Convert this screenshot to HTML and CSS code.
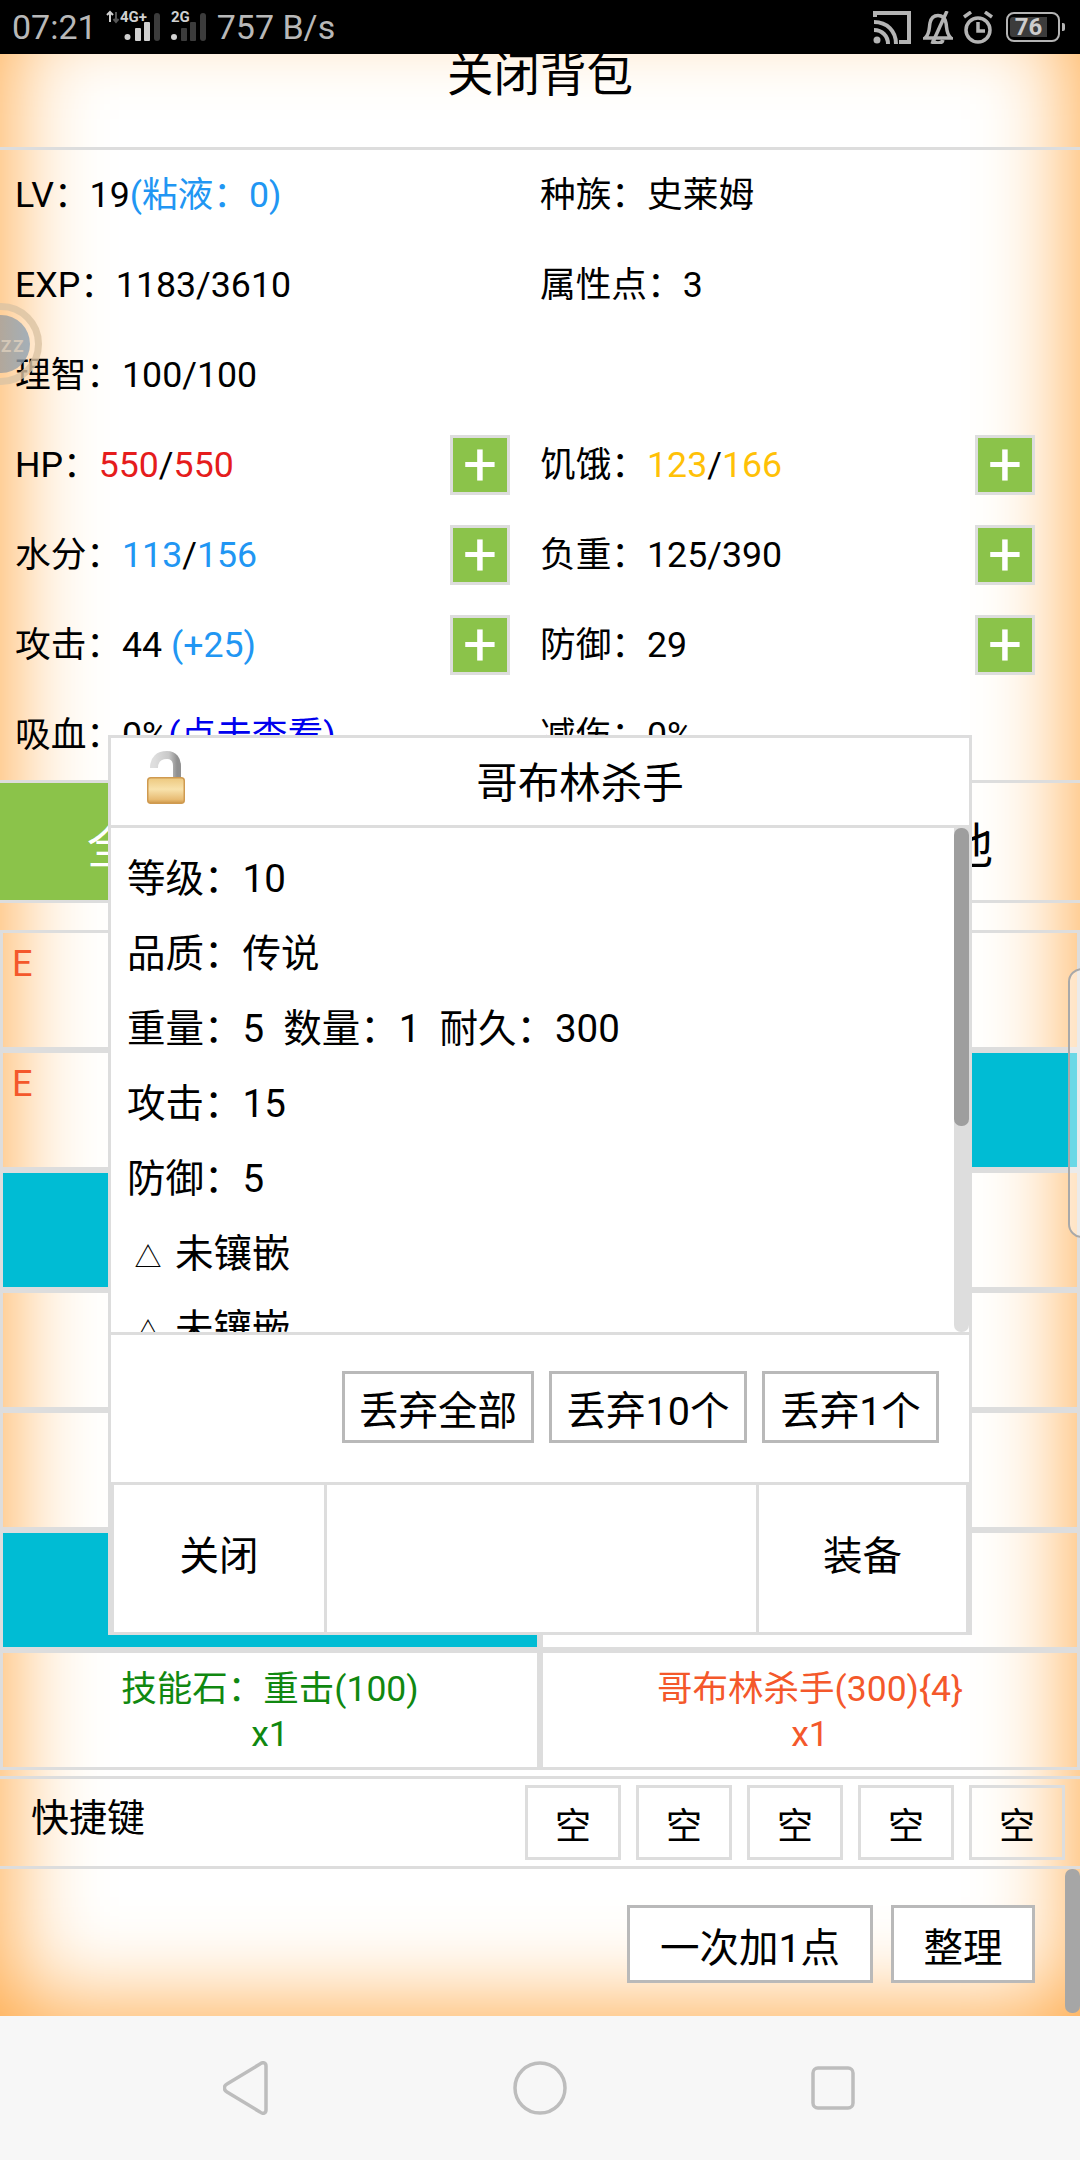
FILE: index.html
```html
<!DOCTYPE html>
<html lang="zh">
<head>
<meta charset="utf-8">
<title>背包</title>
<link rel="stylesheet" href="styles.css">
</head>
<body>
<div class="screen">
  <header class="status">
    <div class="status-left">
      <span class="clock">07:21</span>
      <svg class="sig-a" width="55" height="54" viewBox="0 0 55 54">
        <path d="M4 12V22M1 15L4 12L7 15" fill="none" stroke="#d0d0d0" stroke-width="2"/>
        <path d="M10 12V22M7.500 19L10 22L12.500 19" fill="none" stroke="#555" stroke-width="2"/>
        <text x="14" y="22" class="sig-t">4G+</text>
        <circle cx="21.500" cy="37" r="3" fill="#d0d0d0"/><rect x="29" y="28" width="6" height="13" rx="1" fill="#d0d0d0"/><rect x="38" y="22" width="6" height="19" rx="1" fill="#d0d0d0"/><rect x="48" y="13" width="6" height="28" rx="3" fill="#3c3c3c"/>
      </svg>
      <svg class="sig-b" width="36" height="54" viewBox="0 0 36 54">
        <text x="0" y="22" class="sig-t">2G</text>
        <circle cx="3" cy="37" r="3" fill="#d0d0d0"/><rect x="10" y="28" width="6" height="13" rx="1" fill="#3c3c3c"/><rect x="19" y="22" width="6" height="19" rx="1" fill="#3c3c3c"/><rect x="29" y="13" width="6" height="28" rx="3" fill="#3c3c3c"/>
      </svg>
      <span class="speed">757 B/s</span>
    </div>
    <div class="status-right">
      <svg class="i-cast" width="38" height="33" viewBox="0 0 38 33" fill="none" stroke="#b4b4b4" stroke-width="4">
        <path d="M2 6V2H36V31H26"/><path d="M1 11C14 11 23 20 23 33"/><path d="M1 19C9 19 15 25 15 33"/><circle cx="4" cy="29" r="3.500" fill="#b4b4b4" stroke="none"/>
      </svg>
      <svg class="i-bell" width="30" height="33" viewBox="0 0 30 33" fill="none" stroke="#b4b4b4" stroke-width="3.500">
        <path d="M2 27C7 23 6 17 7 12C8 7 11 4.500 15 4.500C19 4.500 22 7 23 12C24 17 23 23 28 27Z"/><path d="M10 29C11 33 19 33 20 29"/><path d="M24 0L9 33"/>
      </svg>
      <svg class="i-alarm" width="30" height="33" viewBox="0 0 30 33" fill="none" stroke="#b4b4b4" stroke-width="3.500">
        <circle cx="15" cy="19" r="12"/><path d="M15 11V20H22"/><path d="M1 6L8 1"/><path d="M29 6L22 1"/>
      </svg>
      <div class="battery"><span class="battery-fill">76</span></div><span class="battery-cap"></span>
    </div>
  </header>

  <main class="page">
    <div class="title">关闭背包</div>

    <section class="stats">
      <div class="stat"><span>LV：19<span class="blue">(粘液：0)</span></span></div>
      <div class="stat"><span>种族：史莱姆</span></div>
      <div class="stat"><span>EXP：1183/3610</span></div>
      <div class="stat"><span>属性点：3</span></div>
      <div class="stat wide"><span>理智：100/100</span></div>
      <div class="stat"><span>HP：<span class="red">550</span>/<span class="red">550</span></span><button class="plus">+</button></div>
      <div class="stat"><span>饥饿：<span class="yellow">123</span>/<span class="yellow">166</span></span><button class="plus">+</button></div>
      <div class="stat"><span>水分：<span class="blue">113</span>/<span class="blue">156</span></span><button class="plus">+</button></div>
      <div class="stat"><span>负重：125/390</span><button class="plus">+</button></div>
      <div class="stat"><span>攻击：44 <span class="blue">(+25)</span></span><button class="plus">+</button></div>
      <div class="stat"><span>防御：29</span><button class="plus">+</button></div>
      <div class="stat"><span>吸血：0%<span class="link">(点击查看)</span></span></div>
      <div class="stat"><span>减伤：0%</span></div>
    </section>

    <nav class="tabs">
      <div class="tab active">全部</div>
      <div class="tab">装备</div>
      <div class="tab">道具</div>
      <div class="tab">其他</div>
    </nav>

    <section class="items">
      <div class="item rank"><span class="e">E</span></div>
      <div class="item"></div>
      <div class="item rank"><span class="e">E</span></div>
      <div class="item cyan"></div>
      <div class="item cyan"></div>
      <div class="item"></div>
      <div class="item"></div>
      <div class="item"></div>
      <div class="item"></div>
      <div class="item"></div>
      <div class="item cyan"></div>
      <div class="item"></div>
      <div class="item named green">技能石：重击(100)<br>x1</div>
      <div class="item named orange">哥布林杀手(300){4}<br>x1</div>
    </section>

    <section class="shortcuts">
      <span class="shortcut-label">快捷键</span>
      <div class="slots">
        <div class="slot">空</div><div class="slot">空</div><div class="slot">空</div><div class="slot">空</div><div class="slot">空</div>
      </div>
    </section>

    <section class="actions">
      <button class="btn add">一次加1点</button>
      <button class="btn tidy">整理</button>
    </section>
  </main>

  <footer class="nav">
    <svg width="46" height="54" viewBox="0 0 46 54" fill="none" stroke="#bdbdbd" stroke-width="3.500" stroke-linejoin="round"><path d="M37 3C40 0.500 43 2 43 5V49C43 52 40 53.500 37 51L4 31C0.500 29 0.500 25 4 23Z"/></svg>
    <svg width="54" height="54" viewBox="0 0 54 54" fill="none" stroke="#bdbdbd" stroke-width="3.500"><circle cx="27" cy="27" r="25"/></svg>
    <svg width="44" height="44" viewBox="0 0 44 44" fill="none" stroke="#bdbdbd" stroke-width="3.500"><rect x="2" y="2" width="40" height="40" rx="5"/></svg>
  </footer>

  <div class="float-badge" aria-hidden="true">
    <svg width="46" height="88" viewBox="0 0 46 88">
      <defs>
        <linearGradient id="disc" x1="0" x2="1" y1="0" y2="0"><stop offset="0" stop-color="#b09a84"/><stop offset="1" stop-color="#8ea3b6"/></linearGradient>
      </defs>
      <circle cx="1" cy="43" r="37.500" fill="none" stroke="#dcc4a4" stroke-width="7"/>
      <circle cx="1" cy="43" r="29" fill="url(#disc)"/>
      <text x="1" y="51" class="badge-t">ZZ</text>
    </svg>
  </div>
  <div class="side-tab" aria-hidden="true"></div>
  <div class="page-thumb" aria-hidden="true"></div>

  <div class="modal">
    <div class="modal-head">
      <svg class="lock" width="38" height="53" viewBox="0 0 38 53">
        <defs>
          <linearGradient id="shackle" x1="0" x2="1" y1="0" y2="0"><stop offset="0" stop-color="#dedede"/><stop offset=".65" stop-color="#c8c8c8"/><stop offset="1" stop-color="#909090"/></linearGradient>
          <linearGradient id="body" x1="0" x2="0" y1="0" y2="1"><stop offset="0" stop-color="#edc87e"/><stop offset=".45" stop-color="#f8e2ac"/><stop offset=".85" stop-color="#e8bc74"/><stop offset="1" stop-color="#cf9848"/></linearGradient>
        </defs>
        <path d="M7 17C7 8 12 4 20 4C27 4 30 9 30 15V28" fill="none" stroke="url(#shackle)" stroke-width="8"/>
        <rect x="0.750" y="26.750" width="36.500" height="25.500" rx="3" fill="url(#body)" stroke="#cf9a50" stroke-width="1.500"/>
      </svg>
      <div class="modal-title">哥布林杀手</div>
    </div>
    <div class="modal-body">
      <div class="line">等级：10</div>
      <div class="line">品质：传说</div>
      <div class="line">重量：5&nbsp;&nbsp;数量：1&nbsp;&nbsp;耐久：300</div>
      <div class="line">攻击：15</div>
      <div class="line">防御：5</div>
      <div class="line"><span class="tri">△</span>未镶嵌</div>
      <div class="line"><span class="tri">△</span>未镶嵌</div>
      <div class="track"><div class="thumb"></div></div>
    </div>
    <div class="modal-drop">
      <button class="btn drop all">丢弃全部</button>
      <button class="btn drop ten">丢弃10个</button>
      <button class="btn drop one">丢弃1个</button>
    </div>
    <div class="modal-foot">
      <div class="foot-cell">关闭</div>
      <div class="foot-cell mid"></div>
      <div class="foot-cell">装备</div>
    </div>
  </div>
</div>
</body>
</html>
```
FILE: styles.css
```css
* { box-sizing: border-box; }
html, body { margin: 0; padding: 0; }
body {
  width: 1080px;
  height: 2160px;
  overflow: hidden;
  font-family: Roboto, "Noto Sans CJK SC", sans-serif;
  color: #000;
  background: #f7f7f7;
}
button { font: inherit; color: inherit; background: none; padding: 0; }
.screen { position: relative; width: 1080px; height: 2160px; overflow: hidden; display: flex; flex-direction: column; }

.status { height: 54px; background: #000; color: #b8b8b8; display: flex; justify-content: space-between; align-items: center; padding: 0 15px 0 12px; flex: none; position: relative; z-index: 2; }
.status-left, .status-right { display: flex; align-items: center; }
.clock, .speed { font-size: 34px; line-height: 54px; }
.sig-a { margin-left: 9px; }
.sig-b { margin-left: 10px; }
.speed { margin-left: 10px; }
.sig-t { font: 700 15px Roboto, sans-serif; fill: #d0d0d0; }
.i-bell { margin-left: 12px; }
.i-alarm { margin-left: 10px; }
.battery { width: 54px; height: 30px; border: 2px solid #b4b4b4; border-radius: 8px; padding: 3px 0 3px 2px; margin-left: 13px; }
.battery-fill { display: block; width: 37px; height: 20px; background: #3c3c3c; color: #ccc; font: 700 24px/20px Roboto, sans-serif; text-align: center; border-radius: 3px 0 0 3px; }
.battery-cap { width: 3px; height: 8px; background: #b4b4b4; margin-left: 2px; border-radius: 0 2px 2px 0; }

.page {
  height: 1962px;
  flex: none;
  margin-top: -54px;
  padding-top: 54px;
  box-sizing: content-box;
  background: #fff;
  box-shadow: inset 0 0 96px 4px #ffa33a;
}
.title { height: 102px; margin-top: -6px; font-size: 46.500px; line-height: 55px; text-align: center; border-bottom: 3px solid #ddd; }

.stats { display: grid; grid-template-columns: 525px 525px; padding-left: 15px; height: 633px; grid-auto-rows: 90px; align-content: start; border-bottom: 3px solid #ddd; font-size: 35.700px; }
.stat { display: flex; align-items: center; justify-content: space-between; padding-right: 30px; }
.stat > span { padding-bottom: 8px; }
.stat.wide { grid-column: 1 / span 2; }
.blue { color: #2196f3; }
.red { color: #e51c1c; }
.yellow { color: #ffc107; }
.link { color: #0000ee; }
.plus { width: 60px; height: 60px; background: #8bc34a; border: 3px solid #ddd; color: #fff; font-size: 60px; line-height: 48px; font-weight: 400; display: flex; align-items: center; justify-content: center; }

.tabs { display: grid; grid-template-columns: repeat(4, 270px); height: 120px; border-bottom: 3px solid #ddd; font-size: 48px; }
.tab { display: flex; align-items: center; justify-content: center; }
.tab.active { background: #8bc34a; color: #fff; }

.items { margin-top: 27px; display: grid; grid-template-columns: 540px 540px; grid-auto-rows: 120px; font-size: 35.500px; }
.item { border: 3px solid #ddd; }
.item.rank { padding: 0 0 0 9px; line-height: 62px; }
.e { color: #f4582b; font-size: 36px; }
.item.cyan { background: #00bcd4; }
.item.named { text-align: center; line-height: 45px; padding-top: 14px; }
.green { color: #108810; }
.orange { color: #f4582b; }

.shortcuts { margin-top: 6px; border-top: 3px solid #ddd; border-bottom: 3px solid #ddd; display: flex; justify-content: space-between; padding: 6px 15px 0 31px; box-sizing: content-box; height: 81px; }
.shortcut-label { font-size: 38px; line-height: 66px; }
.slots { display: flex; gap: 15px; }
.slot { width: 96px; height: 75px; border: 3px solid #ddd; font-size: 36px; display: flex; align-items: center; justify-content: center; }

.actions { display: flex; justify-content: flex-end; gap: 18px; padding: 36px 45px 0 0; }
.btn { border: 3px solid #b9b9b9; background: #fff; font-size: 39.500px; display: flex; align-items: center; justify-content: center; white-space: nowrap; }
.add { width: 246px; height: 78px; }
.tidy { width: 144px; height: 78px; }

.nav { flex: 1; background: #f7f7f7; display: flex; align-items: center; padding-left: 223px; gap: 244px; }

.float-badge { position: absolute; left: 0; top: 301px; width: 46px; height: 88px; opacity: .8; }
.badge-t { font: 700 17px Roboto, sans-serif; fill: #c9c4bc; letter-spacing: 2px; }
.side-tab { position: absolute; left: 1068px; top: 968px; width: 30px; height: 270px; border: 2px solid #a9a9a9; border-radius: 14px; background: rgba(255,255,255,.42); }
.page-thumb { position: absolute; left: 1065px; top: 1869px; width: 15px; height: 144px; border-radius: 7px; background: #a6a6a6; }

.modal { position: absolute; left: 108px; top: 735px; width: 864px; height: 900px; background: #fff; border: 3px solid #ddd; display: flex; flex-direction: column; z-index: 1; }
.modal-head { height: 87px; flex: none; border-bottom: 3px solid #ddd; box-sizing: content-box; display: flex; align-items: flex-start; padding-left: 36px; }
.lock { margin-top: 13px; flex: none; }
.modal-title { flex: 1; font-size: 41.500px; line-height: 91px; text-align: center; padding-left: 6px; }
.modal-body { position: relative; height: 504px; flex: none; overflow: hidden; padding: 13px 0 0 16px; font-size: 38.500px; }
.line { height: 75px; line-height: 75px; white-space: nowrap; }
.tri { display: inline-block; width: 48px; text-align: center; padding-right: 6px; font-size: 27px; }
.track { position: absolute; right: 0; top: 0; width: 15px; height: 504px; background: #ddd; border-radius: 0 0 7px 7px; }
.thumb { height: 298px; background: #9e9e9e; border-radius: 7px; }
.modal-drop { height: 153px; flex: none; border-top: 3px solid #ddd; border-bottom: 3px solid #ddd; display: flex; justify-content: flex-end; gap: 15px; padding: 36px 30px 0 0; }
.drop { height: 72px; }
.drop.all { width: 192px; }
.drop.ten { width: 198px; }
.drop.one { width: 177px; }
.modal-foot { flex: 1; display: grid; grid-template-columns: 210px 435px 207px; border-left: 3px solid #ddd; border-right: 3px solid #ddd; }
.foot-cell { display: flex; align-items: center; justify-content: center; font-size: 39.500px; padding-bottom: 12px; }
.foot-cell.mid { border-left: 3px solid #ddd; border-right: 3px solid #ddd; }
```
